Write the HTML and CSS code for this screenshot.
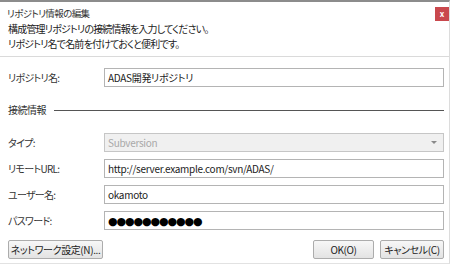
FILE: index.html
```html
<!DOCTYPE html>
<html lang="ja">
<head>
    <meta charset="UTF-8">
    <title>リポジトリ情報の編集</title>
    <link rel="stylesheet" href="styles.css">
</head>
<body>
    <div class="dialog">
        <div class="header">
            <div class="title-row">
                <div class="title">リポジトリ情報の編集</div>
                <div class="close">x</div>
            </div>
            <div class="desc">
                <p>構成管理リポジトリの接続情報を入力してください。</p>
                <p>リポジトリ名で名前を付けておくと便利です。</p>
            </div>
        </div>

        <div class="content">
            <div class="row">
                <label>リポジトリ名:</label>
                <div class="field">ADAS開発リポジトリ</div>
            </div>

            <div class="section">
                <span>接続情報</span>
                <div class="rule"></div>
            </div>

            <div class="rows">
                <div class="row">
                    <label>タイプ:</label>
                    <div class="field select">
                        <span>Subversion</span>
                        <span class="arrow"></span>
                    </div>
                </div>
                <div class="row">
                    <label>リモートURL:</label>
                    <div class="field">http://server.example.com/svn/ADAS/</div>
                </div>
                <div class="row">
                    <label>ユーザー名:</label>
                    <div class="field">okamoto</div>
                </div>
                <div class="row">
                    <label>パスワード:</label>
                    <div class="field"><span class="dots">●●●●●●●●●●●</span></div>
                </div>
            </div>

            <div class="buttons">
                <button class="btn btn-net">ネットワーク設定(N)...</button>
                <div class="right">
                    <button class="btn btn-ok">OK(O)</button>
                    <button class="btn btn-cancel">キャンセル(C)</button>
                </div>
            </div>
        </div>
    </div>
</body>
</html>
```

FILE: styles.css
```css
* {
    margin: 0;
    padding: 0;
    box-sizing: border-box;
    font-family: "Noto Sans CJK JP", sans-serif;
    font-feature-settings: "palt";
}

body {
    background: #fff;
    color: #222;
    font-size: 10px;
    letter-spacing: -0.5px;
}

.dialog {
    width: 450px;
    height: 264px;
    border-top: 2px solid #8c8c8c;
    border-right: 1px solid #dcdcdc;
    border-bottom: 1px solid #e2e2e2;
}

.header {
    padding: 5px 0 5px 7px;
    border-bottom: 1px solid #dadada;
}

.title-row {
    display: flex;
    justify-content: space-between;
    align-items: flex-start;
}

.title {
    line-height: 12px;
    font-size: 9.5px;
    letter-spacing: -0.6px;
    color: #333;
}

.close {
    width: 14px;
    height: 14px;
    background: #c9484d;
    color: #fff;
    font-size: 8px;
    font-weight: bold;
    line-height: 13px;
    text-align: center;
    letter-spacing: 0;
}

.desc {
    margin-top: 1px;
    line-height: 14.5px;
    padding-left: 1px;
    letter-spacing: -0.8px;
    color: #222;
}

.content {
    padding: 11px 5px 0 8px;
}

.row {
    display: grid;
    grid-template-columns: 96px 1fr;
    align-items: center;
}

.row label {
    color: #333;
    letter-spacing: -0.7px;
}

.field {
    height: 19px;
    border: 1px solid #b4b4b4;
    background: #fff;
    padding-left: 3px;
    line-height: 17px;
    white-space: nowrap;
    letter-spacing: -0.3px;
}

.select {
    display: flex;
    justify-content: space-between;
    align-items: center;
    background: #f0f0f0;
    border-color: #c6c6c6;
    color: #a8a8a8;
}

.arrow {
    width: 0;
    height: 0;
    margin-right: 6px;
    border-left: 3px solid transparent;
    border-right: 3px solid transparent;
    border-top: 3px solid #8a8a8a;
}

.dots {
    font-family: "DejaVu Sans", sans-serif;
    font-size: 11px;
    color: #000;
    letter-spacing: -1.1px;
}

.section {
    display: flex;
    align-items: center;
    gap: 8px;
    margin-top: 16px;
    line-height: 14px;
    color: #333;
}

.rule {
    flex: 1;
    height: 1px;
    background: #555;
}

.rows {
    display: flex;
    flex-direction: column;
    gap: 7px;
    margin-top: 16px;
}

.buttons {
    display: flex;
    justify-content: space-between;
    margin-top: 10px;
}

.right {
    display: flex;
    gap: 6px;
}

.btn {
    height: 19px;
    padding: 0;
    border: 1px solid #acacac;
    border-radius: 2px;
    background: linear-gradient(#f7f7f7, #e3e3e3);
    color: #222;
    font-size: 10px;
    letter-spacing: -0.4px;
    line-height: 16px;
    white-space: nowrap;
}

.btn-net {
    width: 95px;
}

.btn-ok {
    width: 61px;
}

.btn-cancel {
    width: 64px;
}
```
